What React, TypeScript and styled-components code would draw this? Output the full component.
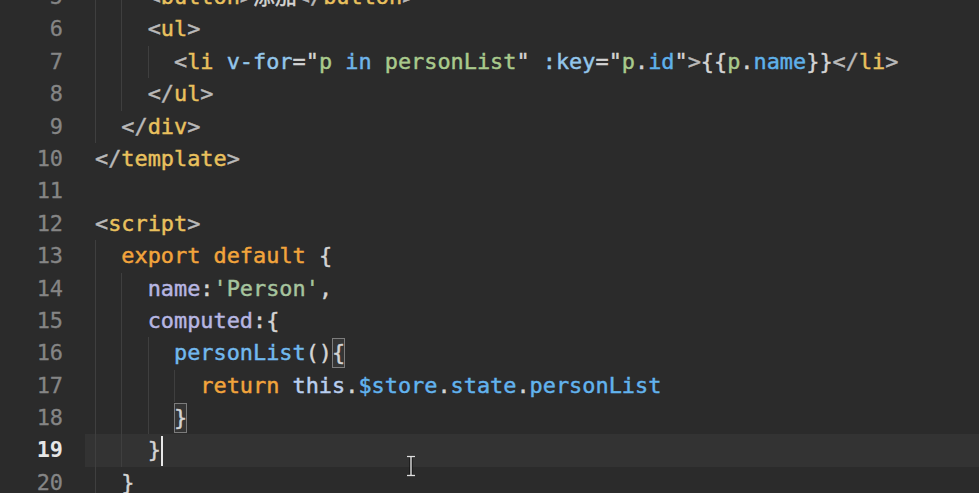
import React from "react";
import styled, { createGlobalStyle } from "styled-components";

const Global = createGlobalStyle`
  html, body { margin: 0; padding: 0; background: #2b2b2b; overflow: hidden; }
  #root { width: 979px; height: 493px; overflow: hidden; }
`;

const colors: Record<string, string> = {
  p: "#d4d4d4",
  punct: "#b9b9b9",
  tag: "#e9c15e",
  attr: "#93c6ea",
  str: "#a9ca8c",
  kw: "#6fb4ea",
  prop: "#5fb1ea",
  ctl: "#f2a43c",
  key: "#b7b6e2",
  sq: "#a6c49e",
  fn: "#72b9ee",
  self: "#b9cff0",
  mem: "#62b3ee",
};

type Tok = [string, string] | ["#box", string] | ["#caret", string];

interface LineData {
  n: number;
  indent: number;
  toks: Tok[];
  current?: boolean;
}

const lines: LineData[] = [
  { n: 5, indent: 2, toks: [["<", "punct"], ["button", "tag"], [">", "punct"], ["添加", "p"], ["</", "punct"], ["button", "tag"], [">", "punct"]] },
  { n: 6, indent: 2, toks: [["<", "punct"], ["ul", "tag"], [">", "punct"]] },
  {
    n: 7,
    indent: 3,
    toks: [
      ["<", "punct"], ["li", "tag"], [" ", "p"], ["v-for", "attr"], ["=\"", "p"], ["p", "str"], [" ", "p"], ["in", "kw"], [" ", "p"],
      ["personList", "str"], ["\"", "p"], [" ", "p"], [":key", "attr"], ["=\"", "p"], ["p", "str"], [".", "p"], ["id", "prop"], ["\"", "p"],
      [">", "punct"], ["{{", "p"], ["p", "str"], [".", "p"], ["name", "prop"], ["}}", "p"], ["</", "punct"], ["li", "tag"], [">", "punct"],
    ],
  },
  { n: 8, indent: 2, toks: [["</", "punct"], ["ul", "tag"], [">", "punct"]] },
  { n: 9, indent: 1, toks: [["</", "punct"], ["div", "tag"], [">", "punct"]] },
  { n: 10, indent: 0, toks: [["</", "punct"], ["template", "tag"], [">", "punct"]] },
  { n: 11, indent: 0, toks: [] },
  { n: 12, indent: 0, toks: [["<", "punct"], ["script", "tag"], [">", "punct"]] },
  { n: 13, indent: 1, toks: [["export", "ctl"], [" ", "p"], ["default", "ctl"], [" ", "p"], ["{", "p"]] },
  { n: 14, indent: 2, toks: [["name", "key"], [":", "p"], ["'Person'", "sq"], [",", "p"]] },
  { n: 15, indent: 2, toks: [["computed", "key"], [":", "p"], ["{", "p"]] },
  { n: 16, indent: 3, toks: [["personList", "fn"], ["()", "p"], ["#box", "{"]] },
  {
    n: 17,
    indent: 4,
    toks: [["return", "ctl"], [" ", "p"], ["this", "self"], [".", "p"], ["$store", "mem"], [".", "p"], ["state", "mem"], [".", "p"], ["personList", "mem"]],
  },
  { n: 18, indent: 3, toks: [["#box", "}"]] },
  { n: 19, indent: 2, toks: [["}", "p"], ["#caret", ""]], current: true },
  { n: 20, indent: 1, toks: [["}", "p"]] },
];

const Editor = styled.div`
  position: relative;
  width: 979px;
  height: 493px;
  background: #2b2b2b;
  overflow: hidden;
  font-family: "DejaVu Sans Mono", "Noto Sans CJK SC", monospace;
  font-size: 21.88px;
`;

const LineList = styled.div`
  display: flex;
  flex-direction: column;
  margin-top: -19px;
`;

const Row = styled.div`
  display: flex;
  height: 32.4px;
  line-height: 32.4px;
  white-space: pre;
`;

const LineNo = styled.div<{ $current?: boolean }>`
  width: 63px;
  flex: none;
  text-align: right;
  color: ${(p) => (p.$current ? "#e6e6e6" : "#858585")};
  font-weight: ${(p) => (p.$current ? 700 : 400)};
  -webkit-text-stroke: ${(p) => (p.$current ? "0" : "0.3px")};
`;

const CodeArea = styled.div<{ $current?: boolean }>`
  flex: 1;
  display: flex;
  align-items: center;
  margin-left: 22px;
  padding-left: 10px;
  background: ${(p) => (p.$current ? "#333333" : "transparent")};
`;

const Guide = styled.span`
  display: inline-block;
  width: 26.34px;
  height: 32.4px;
  box-sizing: border-box;
  border-left: 1px solid #3f3f3f;
  flex: none;
`;

const Token = styled.span<{ $c: string }>`
  color: ${(p) => p.$c};
  -webkit-text-stroke: 0.45px ${(p) => p.$c};
`;

const BracketBox = styled.span`
  display: inline-block;
  height: 30px;
  line-height: 30px;
  color: #d4d4d4;
  -webkit-text-stroke: 0.45px #d4d4d4;
  background: #353535;
  box-shadow: inset 0 0 0 1px #7c7c7c;
`;

const Caret = styled.span`
  display: inline-block;
  width: 2px;
  height: 30px;
  background: #e8e8e8;
  margin-right: -2px;
`;

const MousePointer = styled.svg`
  position: absolute;
  left: 404px;
  top: 455px;
`;

export default function App() {
  return (
    <Editor>
      <Global />
      <LineList>
        {lines.map((l) => (
          <Row key={l.n}>
            <LineNo $current={l.current}>{l.n}</LineNo>
            <CodeArea $current={l.current}>
              {Array.from({ length: l.indent }).map((_, i) => (
                <Guide key={i} />
              ))}
              {l.toks.map((t, i) => {
                if (t[0] === "#box") return <BracketBox key={i}>{t[1]}</BracketBox>;
                if (t[0] === "#caret") return <Caret key={i} />;
                return (
                  <Token key={i} $c={colors[t[1]]}>
                    {t[0]}
                  </Token>
                );
              })}
            </CodeArea>
          </Row>
        ))}
      </LineList>
      <MousePointer width="14" height="22" viewBox="0 0 14 22">
        <path d="M3 1.5h8M3 20.5h8M7 1.5v19" stroke="#111" strokeWidth="3.2" fill="none" />
        <path d="M3 1.5h8M3 20.5h8M7 1.5v19" stroke="#e0e0e0" strokeWidth="1.4" fill="none" />
      </MousePointer>
    </Editor>
  );
}
